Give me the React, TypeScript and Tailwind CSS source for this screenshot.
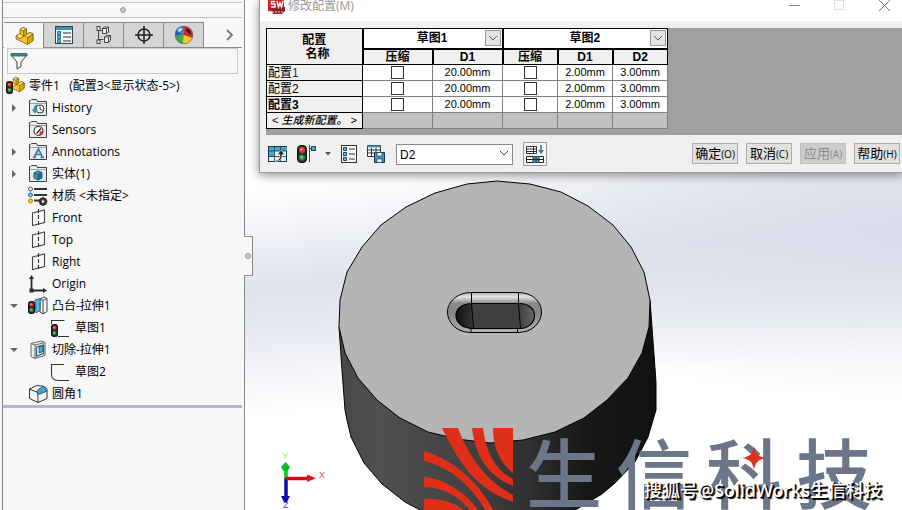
import { useState } from "react";
import type { ReactNode } from "react";

const Lights = ({ x = 0, y = 0 }: { x?: number; y?: number }) => (
  <g transform={`translate(${x} ${y})`}>
    <rect x="0.5" y="0.5" width="6" height="12" rx="2" fill="#20282a" stroke="#111" />
    <circle cx="3.5" cy="3.8" r="2" fill="#e8302a" />
    <circle cx="3" cy="3.2" r="0.7" fill="#ffb0a0" />
    <circle cx="3.5" cy="9" r="2" fill="#2f9a3a" />
    <circle cx="3" cy="8.5" r="0.7" fill="#a8e8a0" />
  </g>
);

const Blocks = () => (
  <g stroke="#7d5a0a" strokeWidth="0.8" strokeLinejoin="round">
    <path d="M2 10l4-2.500V3.500L9 1.500l3.500 1.500v5l3.500-1.500 3 1.500v6.500l-5.500 4L2 13z" fill="#f7c62c" />
    <path d="M6 3.500l3-2 3.500 1.500-3 2z" fill="#fff0a0" />
    <path d="M9.500 5l3-2v6l-3 1.500z" fill="#dca217" />
    <path d="M2 10l4-2.500 3.500 3-3.500 2z" fill="#ffe784" />
    <path d="M10.500 9.500l5.500-3 3 1.500-5.500 3.500z" fill="#ffe784" />
    <path d="M13.500 11.500l5.500-3.500v6.500l-5.500 4z" fill="#dca217" />
  </g>
);

const Svg = ({ children }: { children: ReactNode }) => (
  <svg viewBox="0 0 20 20" className="h-5 w-5 shrink-0" aria-hidden="true">
    {children}
  </svg>
);

const Folder = ({ children }: { children?: ReactNode }) => (
  <Svg>
    <path d="M1.500 17.500v-15h1l1-1h5l1 2h9v14z" fill="#e9ebec" stroke="#3d4245" />
    <path d="M2 5.500h16" stroke="#9ba0a3" />
    {children}
  </Svg>
);

const HistoryIcon = () => (
  <Folder>
    <circle cx="12" cy="11" r="4" fill="#fff" stroke="#333" />
    <path d="M12 8.500V11l2.500 1.500" fill="none" stroke="#222" />
    <path d="M10 6.500c-3 0-4.500 2-4.500 5H3.500l3.500 4 3.200-4H8c0-2 .6-3 2-3.600z" fill="#3a8fb5" />
  </Folder>
);

const SensorIcon = () => (
  <Folder>
    <circle cx="10.500" cy="11" r="4.500" fill="#fff" stroke="#333" strokeWidth="1.200" />
    <path d="M11 15.500a4.500 4.500 0 0 0 4-4.500l-3 .5z" fill="#e0261c" />
    <path d="M8.500 13.500l4.500-5" stroke="#222" strokeWidth="1.200" />
  </Folder>
);

const AnnotationIcon = () => (
  <Folder>
    <path
      d="M6 15.500L10.500 7l4 8.500M7.500 12.500h5.500M5 15.500h3M12.500 15.500h3.500"
      fill="none"
      stroke="#2f7fa8"
      strokeWidth="1.700"
    />
  </Folder>
);

const BodyIcon = () => (
  <Folder>
    <path d="M6 9l4-2 4 1.500v5.500l-4 2-4-2z" fill="#3f9ac2" stroke="#15506c" />
    <path d="M6 9l4 1.500 4-2" fill="none" stroke="#15506c" />
    <path d="M10 10.500V16" stroke="#15506c" />
    <path d="M10.500 11l3-1.500v4l-3 1.700z" fill="#1d6789" />
  </Folder>
);

const MaterialIcon = () => (
  <Svg>
    <path d="M6 3h13M6 9h13M6 14.500h6" stroke="#333" strokeWidth="2" />
    <circle cx="2.500" cy="3" r="2" fill="#eee" stroke="#555" />
    <circle cx="2.500" cy="9" r="2" fill="#7cc8ec" stroke="#1e6c92" />
    <circle cx="2.500" cy="15" r="2" fill="#ffc928" stroke="#b07d07" />
    <circle cx="15" cy="15.500" r="3" fill="none" stroke="#333" strokeWidth="2" />
    <path d="M15 11v9M10.500 15.500h9M12 12.500l6 6M18 12.500l-6 6" stroke="#333" strokeWidth="1.300" />
    <circle cx="15" cy="15.500" r="1.300" fill="#f7f7f7" />
  </Svg>
);

const PlaneIcon = () => (
  <Svg>
    <path d="M4.500 5l12-3v12.500l-12 3z" fill="none" stroke="#444" strokeWidth="1.100" />
    <path d="M10.500 1v18" stroke="#333" strokeWidth="1.100" strokeDasharray="4 2" />
  </Svg>
);

const OriginIcon = () => (
  <Svg>
    <path d="M3.500 3v13.500H17" fill="none" stroke="#2a2a2a" strokeWidth="1.800" />
    <path d="M3.500 1l2.500 4H1zM19 16.500l-4 2.500v-5z" fill="#2a2a2a" />
    <rect x="1.500" y="14.500" width="4" height="4" fill="#2a2a2a" />
  </Svg>
);

const BossIcon = () => (
  <Svg>
    <path d="M12 3l4-2 3 1.500v13l-4 2.500-3-2z" fill="#f4f4f4" stroke="#444" />
    <path d="M12 3l3 1.500L19 2.500M15 4.500V18" fill="none" stroke="#444" />
    <path d="M7 4l5-1.500v12L8 17z" fill="#5db4dc" stroke="#246a8b" />
    <Lights x={0} y={5} />
  </Svg>
);

const CutIcon = () => (
  <Svg>
    <path d="M3 3.500l10-2.500 4 1.500v13l-10 3-4-2z" fill="#eceeef" stroke="#666" />
    <path d="M3 3.500l4 1.500 10-2.500M7 5v13.500" fill="none" stroke="#666" />
    <path d="M8.500 7l7-2v8.500l-7 2.500z" fill="#fff" stroke="#246a8b" strokeWidth="1.300" />
    <path d="M11 6.500l4-1v6l-4 1.500z" fill="#4da5cf" stroke="#174a64" strokeWidth="0.800" />
  </Svg>
);

const SketchIcon = ({ lights }: { lights?: boolean }) => (
  <Svg>
    <path
      d={lights ? "M2.500 6V2.500h13M9 18.500h11" : "M15 2.500H2.500V12c0 4 2 6.500 6.500 6.500h11"}
      fill="none"
      stroke="#333"
      strokeWidth="1.100"
    />
    {lights && <Lights x={2} y={6} />}
  </Svg>
);

const FilletIcon = () => (
  <Svg>
    <path d="M1.500 5l7-3.500 6 .5c3 1 4.500 2.500 4.500 4.500v8L10 18.500l-8.500-4z" fill="#f4f4f4" stroke="#333" />
    <path d="M1.500 5L8.500 8c1 .5 1.500 2 1.500 10.500" fill="none" stroke="#333" />
    <path d="M8.500 7.500l6-5c3 .5 4.500 2 4.500 4.500l-8.500 3.500c0-1.500-.8-2.500-2-3z" fill="#4ba3cc" stroke="#1b5a7a" />
  </Svg>
);

type Node = { label: string; icon: ReactNode; arrow?: "open" | "closed"; child?: boolean };

const nodes: Node[] = [
  { label: "History", icon: <HistoryIcon />, arrow: "closed" },
  { label: "Sensors", icon: <SensorIcon /> },
  { label: "Annotations", icon: <AnnotationIcon />, arrow: "closed" },
  { label: "实体(1)", icon: <BodyIcon />, arrow: "closed" },
  { label: "材质 <未指定>", icon: <MaterialIcon /> },
  { label: "Front", icon: <PlaneIcon /> },
  { label: "Top", icon: <PlaneIcon /> },
  { label: "Right", icon: <PlaneIcon /> },
  { label: "Origin", icon: <OriginIcon /> },
  { label: "凸台-拉伸1", icon: <BossIcon />, arrow: "open" },
  { label: "草图1", icon: <SketchIcon lights />, child: true },
  { label: "切除-拉伸1", icon: <CutIcon />, arrow: "open" },
  { label: "草图2", icon: <SketchIcon />, child: true },
  { label: "圆角1", icon: <FilletIcon /> },
];

const tabs: { name: string; icon: ReactNode }[] = [
  { name: "设计树", icon: <Blocks /> },
  {
    name: "属性",
    icon: (
      <>
        <rect x="1.500" y="1.500" width="17" height="17" fill="#f5f7f8" stroke="#2a4654" />
        <path d="M2 3.500h16" stroke="#3c93b8" strokeWidth="3" />
        <path d="M9 8h8M9 12h8M9 16h8" stroke="#333" />
        <path d="M3.500 6.500h3v3h-3zM3.500 10.500h3v3h-3zM3.500 14.500h3v3h-3z" fill="#4eb0d8" stroke="#1c5a78" strokeWidth="0.800" />
      </>
    ),
  },
  {
    name: "配置",
    icon: (
      <g fill="#eee" stroke="#444">
        <path d="M4.500 3v15M4.500 5.500h5M4.500 14.500h5" fill="none" />
        <rect x="3" y="1.500" width="3" height="4" />
        <rect x="3" y="15" width="3" height="3.500" />
        <path d="M8.500 3.500l2-1.500h4v5l-2 1.500h-4zM10.500 12l2-1.500h4v5l-2 2h-4z" />
        <path d="M8.500 3.500h4v5M12.500 3.500l2-1.500M10.500 12h4v5.500M14.500 12l2-1.500" fill="none" />
      </g>
    ),
  },
  {
    name: "尺寸",
    icon: (
      <g fill="none" stroke="#222" strokeWidth="1.600">
        <circle cx="10" cy="10" r="6" />
        <path d="M10 1v18M1 10h18" />
      </g>
    ),
  },
  {
    name: "外观",
    icon: (
      <g>
        <path d="M10 10L2 5a9 9 0 0 1 8-4z" fill="#3a83d8" />
        <path d="M10 10L2 5a9 9 0 0 0-.8 6z" fill="#2260b8" />
        <path d="M10 10L1.200 11A9 9 0 0 0 9 19z" fill="#45a83c" />
        <path d="M10 10L9 19a9 9 0 0 0 9.500-6z" fill="#f6c928" />
        <path d="M10 10l8.500 3A9 9 0 0 0 10 1z" fill="#d92b22" />
        <path d="M12 3.500c3 0 5 3 5 6-2-.5-5-3-5-6z" fill="#301010" />
        <circle cx="10" cy="10" r="8.800" fill="none" stroke="#6a6a6a" strokeWidth="0.700" />
        <path d="M4 5c1-1.500 2-2 3.500-2.500L8 5 5 7z" fill="#cfe4fb" />
      </g>
    ),
  },
];

const FeatureTree = () => {
  const [active, setActive] = useState(0);
  return (
    <aside className="flex w-[245px] shrink-0 flex-col border-r border-[#8a8a8a] bg-[#f7f7f7] pl-[2px]">
      <div className="flex flex-1 flex-col border-l border-[#8a8a8a]">
        <div className="mt-[2px] mr-[2px] flex h-4 items-center justify-center border-y border-[#c4c4c4]">
          <span className="h-[6px] w-[6px] rounded-full border border-[#999] bg-[#ccc]" />
        </div>
        <div className="mt-1 mr-[2px] flex h-[26px] border-b border-[#8a8a8a] pl-px">
          {tabs.map((t, i) => (
            <button
              key={t.name}
              aria-label={t.name}
              onClick={() => setActive(i)}
              className={`flex w-10 items-center justify-center border-t border-r border-[#8a8a8a] ${
                active === i ? "-mb-px bg-[#f7f7f7]" : "bg-[#d5d5d5]"
              }`}
            >
              <svg viewBox="0 0 20 20" className="h-5 w-5">
                {t.icon}
              </svg>
            </button>
          ))}
          <button aria-label="更多" className="mr-[2px] ml-auto flex w-5 items-center justify-center">
            <svg viewBox="0 0 10 12" className="h-3 w-[10px]">
              <path d="M2 1l5 5-5 5" fill="none" stroke="#777" strokeWidth="1.800" />
            </svg>
          </button>
        </div>
        <label className="mr-[6px] ml-1 flex h-[26px] items-center border border-[#c8c8c8]">
          <svg viewBox="0 0 18 20" className="ml-[2px] h-5 w-[18px]" aria-hidden="true">
            <path d="M1 4l6 7v7l4-2.500V11l6-7z" fill="#f2f2f2" stroke="#444" />
            <path d="M1 2.500h16v2.500H1z" fill="#2f8ab0" stroke="#1c5a78" strokeWidth="0.800" />
          </svg>
          <input aria-label="过滤" className="min-w-0 flex-1 bg-transparent px-1 text-xs outline-none" />
        </label>
        <div className="flex h-[23px] items-center gap-1 pl-[2px] text-xs">
          <svg viewBox="0 0 20 20" className="h-5 w-5 shrink-0" aria-hidden="true">
            <g transform="translate(3 0) scale(0.850)">
              <Blocks />
            </g>
            <Lights x={1} y={5} />
          </svg>
          <span className="whitespace-pre">零件1   (配置3&lt;显示状态-5&gt;)</span>
        </div>
        <ul>
          {nodes.map((n) => (
            <li key={n.label} className={`flex h-[22px] items-center text-xs ${n.child ? "pl-[46px]" : "pl-[6px]"}`}>
              {!n.child && (
                <span className="flex w-[19px] shrink-0">
                  {n.arrow && (
                    <button aria-label={n.label} className="flex h-[10px] w-[10px] items-center justify-center">
                      <svg viewBox="0 0 8 8" className="h-2 w-2">
                        <path d={n.arrow === "open" ? "M0 2h8L4 6z" : "M2 0l4 4-4 4z"} fill="#666" />
                      </svg>
                    </button>
                  )}
                </span>
              )}
              {n.icon}
              <span className={n.child ? "pl-[6px]" : "pl-1"}>{n.label}</span>
            </li>
          ))}
        </ul>
        <div className="mr-[2px] h-[3px] bg-[#b4b6d2]" />
      </div>
    </aside>
  );
};

// Side walls are drawn first, the top face covers their upper part.
const Model = () => (
  <svg
    viewBox="245 0 657 510"
    preserveAspectRatio="xMinYMin slice"
    className="absolute inset-0 h-full w-full"
    role="img"
    aria-label="模型"
  >
    <defs>
      <linearGradient id="wall" x1="340" x2="656" y1="0" y2="0" gradientUnits="userSpaceOnUse">
        <stop offset="0" stopColor="#484848" />
        <stop offset="0.120" stopColor="#505050" />
        <stop offset="0.400" stopColor="#424242" />
        <stop offset="0.600" stopColor="#303030" />
        <stop offset="0.780" stopColor="#171717" />
        <stop offset="1" stopColor="#111" />
      </linearGradient>
      <linearGradient id="lip" x1="0" x2="0" y1="292" y2="332" gradientUnits="userSpaceOnUse">
        <stop offset="0" stopColor="#aaa" />
        <stop offset="0.120" stopColor="#e4e4e4" />
        <stop offset="0.280" stopColor="#8a8a8a" />
        <stop offset="0.550" stopColor="#888" />
        <stop offset="1" stopColor="#b0b0b0" />
      </linearGradient>
      <linearGradient id="pit" x1="456" x2="535" y1="0" y2="0" gradientUnits="userSpaceOnUse">
        <stop offset="0" stopColor="#111" />
        <stop offset="0.200" stopColor="#333" />
        <stop offset="0.210" stopColor="#404040" />
        <stop offset="0.800" stopColor="#404040" />
        <stop offset="1" stopColor="#666" />
      </linearGradient>
    </defs>
    <path
      d="M339 327L342 370 345 410 347 420 351 437 364 463 382 484 405 502 424 512H572L577 509 602 494 615 483 635 462 648 437 653 420 656 410V382L650 300z"
      fill="url(#wall)"
      stroke="#000"
    />
    <path
      d="M497 181L530 184 561 192 588 206 613 225 631 247 644 272 650 300 649 327 642 353 628 378 607 400 584 418 555 432 523 440 490 443 457 439 428 432 400 418 377 400 358 378 345 353 339 327 340 300 347 272 362 247 381 225 406 207 435 193 467 184z"
      fill="#b5b5b5"
      stroke="#000"
    />
    <path
      d="M472 292.500H518C533 292.500 541.500 302 541.500 312S533 332.500 518 332.500H471C456 332.500 447.500 322 447.500 312S457 292.500 472 292.500z"
      fill="url(#lip)"
      stroke="#000"
    />
    <path
      d="M473 303.500H519C529 303.500 534.500 309 534.500 315.500S529 328.500 520 328.500H473C463 328.500 456 323 456 315.500S463 303.500 473 303.500z"
      fill="url(#pit)"
      stroke="#000"
      strokeWidth="1.200"
    />
    <path
      d="M471.500 292.500V303.500L473.500 328.500M518.500 292.500V303.500L520.500 328.500M471 328.500V332M517.500 328.500V332"
      fill="none"
      stroke="#000"
    />

    <g strokeWidth="3.500">
      <path d="M286 478V466" stroke="#00c818" />
      <path d="M286 478V498" stroke="#0808b0" />
      <path d="M286 478.500H308" stroke="#cc1010" />
    </g>
    <path d="M281 467l4.500-5 4.500 5-2.500 4h-4z" fill="#08b820" />
    <path d="M281 496h9l-3 6h-3z" fill="#0808b0" />
    <path d="M307 474.500l9 3.800-9 3.700z" fill="#d81818" />
    <g fontFamily="Liberation Sans, sans-serif" fontSize="9">
      <text x="282" y="459" fill="#70ff70">Y</text>
      <text x="319" y="478" fill="#ff4040">X</text>
      <text x="283" y="508" fill="#4040e8">Z</text>
    </g>

    <g fill="#e02f18">
      <path d="M442 428h16c10 26 25 51 55 67v7c-40-14-56-44-71-74z" />
      <path d="M472 428h11c3 24 12 42 30 51v7c-27-11-38-32-41-58z" />
      <path d="M493 428h20v45c-13-10-20-25-20-45z" />
      <path d="M424 451c32 10 55 32 70 60h-8c-13-22-33-43-62-50z" />
      <path d="M424 477c22 2 42 16 55 34h-8c-12-14-27-24-47-24z" />
      <path d="M424 499c17-1 29 3 41 12h-41z" />
    </g>
  </svg>
);

const Check = ({ label }: { label: string }) => (
  <input
    type="checkbox"
    aria-label={label}
    className="mx-auto block h-[13px] w-[13px] appearance-none border border-[#333] bg-white checked:bg-[#333]"
  />
);

const DropButton = ({ label }: { label: string }) => (
  <button
    aria-label={label}
    className="mr-px flex h-4 w-4 items-center justify-center border border-[#999] bg-[#e4e4e4]"
  >
    <svg viewBox="0 0 10 6" className="h-[6px] w-[10px]">
      <path d="M1 1l4 4 4-4" fill="none" stroke="#555" />
    </svg>
  </button>
);

const configs = ["配置1", "配置2", "配置3"];
const th = "border border-black bg-[#f0f0f0] p-0 font-bold";
const td = "border border-[#808080] bg-white p-0 text-center";

const ConfigTable = () => (
  <table className="w-[401px] table-fixed border-collapse text-[11px] leading-none">
    <colgroup>
      <col className="w-[96px]" />
      <col className="w-[70px]" />
      <col className="w-[70px]" />
      <col className="w-[55px]" />
      <col className="w-[55px]" />
      <col className="w-[55px]" />
    </colgroup>
    <thead className="text-xs leading-none">
      <tr className="h-5">
        <th rowSpan={2} className={`${th} leading-[14px]`}>
          配置
          <br />
          &nbsp;&nbsp;名称
        </th>
        {["草图1", "草图2"].map((s, i) => (
          <th key={s} colSpan={i + 2} className={`${th} border-l-2 bg-white`}>
            <div className="flex items-center">
              <span className="flex-1 pl-4">{s}</span>
              <DropButton label={s} />
            </div>
          </th>
        ))}
      </tr>
      <tr className="h-4">
        {["压缩", "D1", "压缩", "D1", "D2"].map((h, i) => (
          <th key={i} className={`${th} border-t-2 border-l-2`}>
            {h}
          </th>
        ))}
      </tr>
    </thead>
    <tbody>
      {configs.map((c, i) => (
        <tr key={c} className="h-4">
          <th className={`${th} pl-px text-left text-xs leading-none`}>
            <span className={i === 2 ? "font-bold" : "font-normal"}>{c.slice(0, 2)}</span>
            <span className={i === 0 ? "font-normal text-[#601060]" : i === 2 ? "font-bold" : "font-normal"}>
              {c.slice(2)}
            </span>
          </th>
          <td className={td}>
            <Check label={`${c} 草图1 压缩`} />
          </td>
          <td className={td}>20.00mm</td>
          <td className={td}>
            <Check label={`${c} 草图2 压缩`} />
          </td>
          <td className={td}>2.00mm</td>
          <td className={td}>3.00mm</td>
        </tr>
      ))}
      <tr className="h-4">
        <th className={`${th} text-[11px] font-normal whitespace-nowrap`}>
          &lt; <i className="font-medium">生成新配置。</i> &gt;
        </th>
        {[0, 1, 2, 3, 4].map((i) => (
          <td key={i} className="border border-[#808080] bg-[#c0c0c0] p-0" />
        ))}
      </tr>
    </tbody>
  </table>
);

const actions = [
  { text: "确定", key: "O" },
  { text: "取消", key: "C" },
  { text: "应用", key: "A", disabled: true },
  { text: "帮助", key: "H" },
];

const Dialog = () => (
  <section className="absolute top-0 right-0 left-[14px] border-b border-l border-[#999] bg-[#f0f0f0] font-['Liberation_Sans','Noto_Sans_CJK_SC',sans-serif] shadow-[0_2px_10px_rgba(0,0,0,0.450)]">
    <header className="flex h-[21px] overflow-hidden bg-white pr-3 pl-2 text-[#999]">
      <svg viewBox="0 0 18 18" className="-mt-1 h-[18px] w-[18px]" aria-hidden="true">
        <path d="M0 0h16v12l-3 4-13-1z" fill="#cf1f28" />
        <path d="M3 13l3-2h11v4l-3 3H5z" fill="#8f2026" />
        <path d="M4 16h12" stroke="#ddd" strokeDasharray="2 1" />
        <path d="M7 5.500H3.500v2.500H7v3H3M9 5l1.500 6 1.500-4 1.500 4L15 5" fill="none" stroke="#fff" strokeWidth="1.400" />
      </svg>
      <h1 className="-mt-1 ml-[2px] font-['Open_Sans','Noto_Sans_CJK_SC',sans-serif] text-xs leading-5">修改配置(M)</h1>
      <div className="ml-auto flex h-[11px] items-center gap-[34px]">
        <button aria-label="最小化">
          <svg viewBox="0 0 11 11" className="h-[11px] w-[11px]">
            <path d="M0 5.500h11" stroke="#888" />
          </svg>
        </button>
        <button aria-label="最大化">
          <svg viewBox="0 0 11 11" className="h-[11px] w-[11px]">
            <rect x="0.500" y="0.500" width="9" height="9" fill="none" stroke="#e0e0e0" />
          </svg>
        </button>
        <button aria-label="关闭">
          <svg viewBox="0 0 11 11" className="h-[11px] w-[11px]">
            <path d="M0 0l11 11M11 0L0 11" stroke="#777" />
          </svg>
        </button>
      </div>
    </header>
    <div className="mt-[7px] ml-[6px] h-[107px] bg-[#a0a0a0]">
      <ConfigTable />
    </div>
    <div className="flex h-[37px] items-center pr-[2px] pl-2">
      <button aria-label="重建">
        <svg viewBox="0 0 20 18" className="h-[18px] w-5">
          <rect x="0.500" y="1.500" width="18" height="15" fill="#e7ecef" stroke="#1b3948" />
          <path d="M1 2h18v4H1zM1 6h5v6H1z" fill="#4aa5cc" />
          <path d="M1 6h18M1 11.500h18M6.500 2v14M12.500 2v14" stroke="#1b3948" strokeWidth="0.800" />
          <path d="M7 15.500c4 0 5-2 5-6H9.500L13 5l3.500 4.500H14c0 5-2 7-7 7z" fill="#222" stroke="#fff" strokeWidth="0.500" />
        </svg>
      </button>
      <button aria-label="压缩状态" className="ml-[9px]">
        <svg viewBox="0 0 20 20" className="h-5 w-5">
          <rect x="0.500" y="1.500" width="9" height="17" rx="3.500" fill="#263034" stroke="#111" />
          <circle cx="5" cy="6" r="3" fill="#e5352c" />
          <circle cx="4.500" cy="5.500" r="1" fill="#ffc0b0" />
          <circle cx="5" cy="13.500" r="3" fill="#2c8f3a" />
          <circle cx="4.500" cy="13" r="1" fill="#a8e8a0" />
          <path d="M12.500 1v17M12 4.500h3" stroke="#444" />
          <rect x="14.500" y="2.500" width="4" height="4" fill="#4aa5cc" stroke="#1b4a62" />
        </svg>
      </button>
      <button aria-label="选项" className="ml-2">
        <svg viewBox="0 0 6 4" className="h-1 w-[6px]">
          <path d="M0 0h6L3 3.500z" fill="#555" />
        </svg>
      </button>
      <button aria-label="参数" className="ml-[9px]">
        <svg viewBox="0 0 18 20" className="h-5 w-[18px]">
          <rect x="1.500" y="1.500" width="15" height="17" fill="#f7f7f7" stroke="#333" />
          <path d="M3.500 3.500h3v3h-3zM3.500 8.500h3v3h-3zM3.500 13.500h3v3h-3z" fill="#66bde0" stroke="#1b4a62" />
          <path d="M9 5h6M9 10h6M9 15h6" stroke="#333" />
        </svg>
      </button>
      <button aria-label="保存" className="ml-2">
        <svg viewBox="0 0 20 20" className="h-5 w-5">
          <path d="M1.500 1.500h13v11h-13z" fill="#fff" stroke="#333" />
          <path d="M1.500 2.500h13" stroke="#3f97bd" strokeWidth="2" />
          <path d="M1.500 6h13M1.500 9h13M5.500 4v8M10 4v8" stroke="#333" />
          <path d="M8.500 8.500h10v10h-10z" fill="#4291b4" stroke="#123b50" />
          <path d="M11 8.500h5v3.500h-5zM11 15h5v3.500h-5z" fill="#fff" stroke="#123b50" strokeWidth="0.700" />
        </svg>
      </button>
      <div className="relative ml-[10px]">
        <select
          aria-label="参数名"
          className="h-[21px] w-[117px] appearance-none border border-[#8a8a8a] bg-white pl-[3px] text-xs outline-none"
        >
          <option>D2</option>
          <option>D1</option>
        </select>
        <svg viewBox="0 0 10 6" className="pointer-events-none absolute top-2 right-1 h-[6px] w-[10px]">
          <path d="M1 1l4 4 4-4" fill="none" stroke="#444" />
        </svg>
      </div>
      <button
        aria-label="隐藏表格"
        className="ml-[10px] flex h-6 w-6 items-center justify-center border border-[#999] bg-[#f4f4f4]"
      >
        <svg viewBox="0 0 20 20" className="h-5 w-5 shrink-0">
          <path d="M1.500 2.500h10v7h-10zM1.500 5h10M1.500 7.500h10M8.500 2.500v7" fill="#fff" stroke="#333" />
          <path d="M1.500 12.500h17v6h-17z" fill="#fff" stroke="#222" />
          <path d="M8 12.500h6v6H8z" fill="#48a0c8" />
          <path d="M1.500 15.500h17M8 12.500v6M11 12.500v6M14 12.500v6" stroke="#222" />
          <path d="M16 1v6" stroke="#2b7fa6" strokeWidth="1.600" />
          <path d="M13 6h6l-3 4z" fill="#2b7fa6" />
        </svg>
      </button>
      <div className="ml-auto flex gap-2 font-['Open_Sans','Noto_Sans_CJK_SC',sans-serif]">
        {actions.map((a) => (
          <button
            key={a.key}
            disabled={a.disabled}
            className="h-[21px] w-[46px] border border-[#adadad] bg-[#e1e1e1] text-[13px] leading-none whitespace-nowrap disabled:border-[#bfbfbf] disabled:bg-[#ccc] disabled:text-[#8a8a8a]"
          >
            {a.text}
            <span className="text-[10px]">({a.key})</span>
          </button>
        ))}
      </div>
    </div>
  </section>
);

const Watermark = () => (
  <div className="absolute right-0 bottom-0 font-['Noto_Sans','Noto_Sans_CJK_SC',sans-serif]">
    <div className="flex gap-[14px] pr-[30px] text-[76px] leading-[72px] font-medium text-[#6b7788]">
      <span>生</span>
      <span>信</span>
      <span className="relative">
        科
        <svg viewBox="0 0 24 24" className="absolute top-2 right-4 h-6 w-6" aria-hidden="true">
          <path d="M12 0c1.500 8 4 10.500 12 12-8 1.500-10.500 4-12 12-1.500-8-4-10.500-12-12 8-1.500 10.500-4 12-12z" fill="#e02f18" />
        </svg>
      </span>
      <span>技</span>
    </div>
    <p className="absolute right-5 bottom-2 text-lg leading-6 font-medium whitespace-nowrap text-white [text-shadow:1px_1px_0_#000,2px_2px_1px_#000]">
      搜狐号@SolidWorks生信科技
    </p>
  </div>
);

const App = () => {
  return (
    <div className="flex h-screen overflow-hidden bg-white font-['Open_Sans','Noto_Sans_CJK_SC',sans-serif] text-black">
      <FeatureTree />
      <main className="relative flex-1 bg-linear-[174deg,#ffffff_33%,#dfe3ee_50%,#e6e9f2_57%,#ffffff_72%]">
        <div className="absolute inset-0 bg-[radial-gradient(ellipse_70%_32%_at_100%_46%,#dadde9,transparent)]" />
        <Model />
        <button
          aria-label="收起面板"
          className="absolute top-[236px] -left-px flex h-10 w-[9px] items-center justify-center border border-l-0 border-[#8a8a8a] bg-[#f7f7f7]"
        >
          <span className="h-[6px] w-[6px] rounded-full border border-[#999] bg-[#ccc]" />
        </button>
        <Watermark />
        <Dialog />
      </main>
    </div>
  );
};

export default App;
